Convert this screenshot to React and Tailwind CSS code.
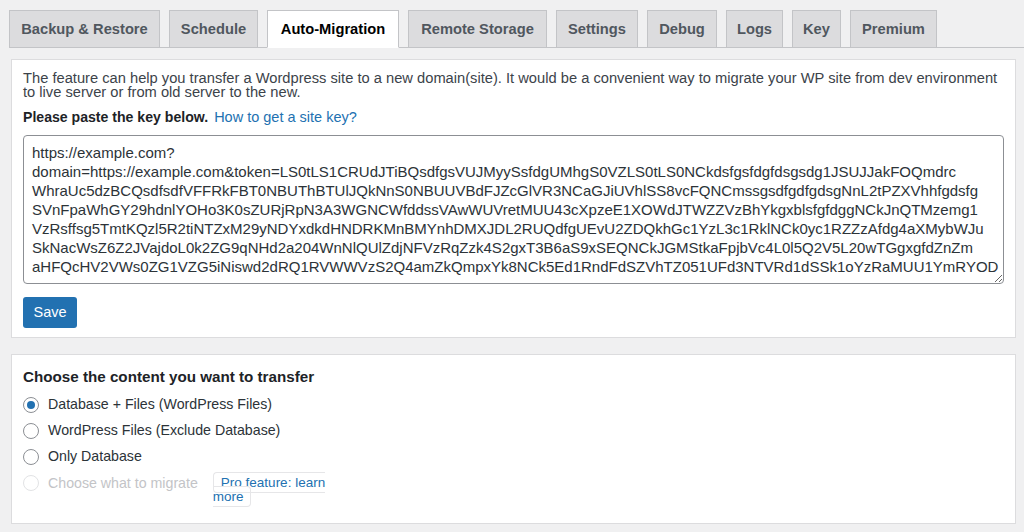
import React, { useState } from 'react';

const tabs = [
    { label: 'Backup & Restore', w: 'w-[151px]' },
    { label: 'Schedule', w: 'w-[89px]' },
    { label: 'Auto-Migration', w: 'w-[132px]' },
    { label: 'Remote Storage', w: 'w-[139px]' },
    { label: 'Settings', w: 'w-[82px]' },
    { label: 'Debug', w: 'w-[70px]' },
    { label: 'Logs', w: 'w-[57px]' },
    { label: 'Key', w: 'w-[49px]' },
    { label: 'Premium', w: 'w-[87px]' },
];

const keyText = [
    'https://example.com?',
    'domain=https://example.com&token=LS0tLS1CRUdJTiBQsdfgsVUJMyySsfdgUMhgS0VZLS0tLS0NCkdsfgsfdgfdsgsdg1JSUJJakFOQmdrc',
    'WhraUc5dzBCQsdfsdfVFFRkFBT0NBUThBTUlJQkNnS0NBUUVBdFJZcGlVR3NCaGJiUVhlSS8vcFQNCmssgsdfgdfgdsgNnL2tPZXVhhfgdsfg',
    'SVnFpaWhGY29hdnlYOHo3K0sZURjRpN3A3WGNCWfddssVAwWUVretMUU43cXpzeE1XOWdJTWZZVzBhYkgxblsfgfdggNCkJnQTMzemg1',
    'VzRsffsg5TmtKQzl5R2tiNTZxM29yNDYxdkdHNDRKMnBMYnhDMXJDL2RUQdfgUEvU2ZDQkhGc1YzL3c1RklNCk0yc1RZZzAfdg4aXMybWJu',
    'SkNacWsZ6Z2JVajdoL0k2ZG9qNHd2a204WnNlQUlZdjNFVzRqZzk4S2gxT3B6aS9xSEQNCkJGMStkaFpjbVc4L0l5Q2V5L20wTGgxgfdZnZm',
    'aHFQcHV2VWs0ZG1VZG5iNiswd2dRQ1RVWWVzS2Q4amZkQmpxYk8NCk5Ed1RndFdSZVhTZ051UFd3NTVRd1dSSk1oYzRaMUU1YmRYOD',
].join('\n');

const options = [
    'Database + Files (WordPress Files)',
    'WordPress Files (Exclude Database)',
    'Only Database',
];

const Radio = ({ checked, disabled }) => (
    <span className={`w-4 h-4 rounded-full border flex items-center justify-center bg-white shrink-0 ${disabled ? 'border-[#e2e3e5]' : 'border-[#8c8f94]'}`}>
        {checked && <span className="w-2 h-2 rounded-full bg-[#2271b1]"></span>}
    </span>
);

const App = () => {
    const [active, setActive] = useState('Auto-Migration');
    const [choice, setChoice] = useState(0);
    const [key, setKey] = useState(keyText);

    return (
        <div className="min-h-[532px] bg-[#f0f0f1] text-[#3c434a] font-['Liberation_Sans',Arial,sans-serif] overflow-hidden">
            {/* Tabs */}
            <div className="flex gap-[9px] ml-[9px] pt-[10px] border-b border-[#c3c4c7]">
                {tabs.map(t => (
                    <button
                        key={t.label}
                        onClick={() => setActive(t.label)}
                        className={`${t.w} h-[38px] -mb-px border text-[14.7px] font-bold whitespace-nowrap ${t.label === active ? 'bg-white border-[#c3c4c7] border-b-white text-black' : 'bg-[#dcdcde] border-[#c3c4c7] text-[#50575e]'}`}
                    >
                        {t.label}
                    </button>
                ))}
            </div>

            {/* Key panel */}
            <div className="mt-[11px] ml-[11px] mr-[8px] bg-white border border-[#dcdcde] px-[11px] pt-[11px] pb-[9px]">
                <p className="text-[14.7px] leading-[14px]">
                    The feature can help you transfer a Wordpress site to a new domain(site). It would be a convenient way to migrate your WP site from dev environment<br />
                    to live server or from old server to the new.
                </p>
                <p className="mt-2 leading-[20px]">
                    <span className="font-bold text-[14.1px] text-[#1d2327]">Please paste the key below.</span>
                    <a href="#" className="ml-[6px] text-[14.5px] text-[#2271b1]">How to get a site key?</a>
                </p>
                <textarea
                    wrap="off"
                    value={key}
                    onChange={(e) => setKey(e.target.value)}
                    className="mt-2 block w-full h-[149px] border border-[#8c8f94] rounded-[4px] px-[8px] pt-[7px] text-[15px] leading-[19px] text-[#2c3338] overflow-hidden outline-none"
                />
                <button className="mt-[13px] h-[31px] w-[54px] rounded-[3px] bg-[#2271b1] text-white text-[14.5px]">Save</button>
            </div>

            {/* Content panel */}
            <div className="mt-4 ml-[11px] mr-[8px] bg-white border border-[#dcdcde] px-[11px] pt-3 pb-[19px]">
                <h2 className="text-[15.2px] leading-[20px] font-bold text-[#1d2327]">Choose the content you want to transfer</h2>
                <div className="mt-[5px]">
                    {options.map((o, i) => (
                        <label key={o} onClick={() => setChoice(i)} className="flex items-center gap-[9px] h-[26px] text-[14.2px] text-[#2c3338] cursor-pointer">
                            <Radio checked={choice === i} />
                            {o}
                        </label>
                    ))}
                    <div className="flex items-start">
                        <span className="mt-[5px]"><Radio disabled /></span>
                        <span className="ml-[9px] leading-[26px] text-[14.2px] text-[#c3c4c7]">Choose what to migrate</span>
                        <span className="ml-[15px] mt-[6px] inline-block w-[116px] leading-[14px] text-[13.5px]">
                            <a href="#" className="border border-[#e6e6e8] rounded-[4px] pl-[7px] pr-[6px] py-[2px] text-[#2271b1]">Pro feature: learn more</a>
                        </span>
                    </div>
                </div>
            </div>
        </div>
    );
};

export default App;
